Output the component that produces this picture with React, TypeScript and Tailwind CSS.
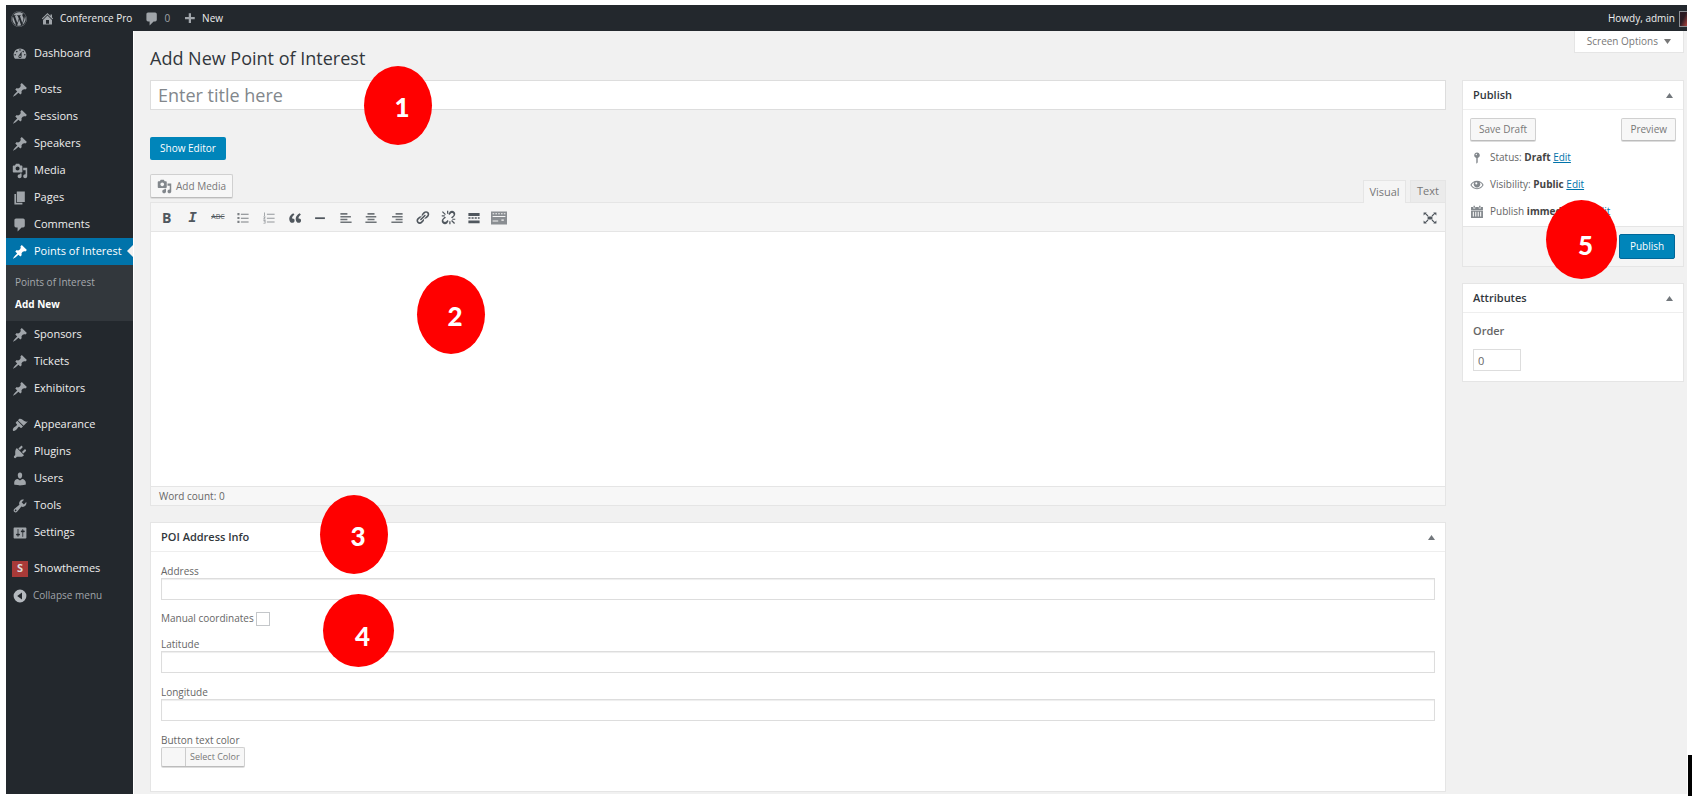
import { ReactNode } from 'react'
import { FaWordpress } from 'react-icons/fa'

const ICONS = {
  dashboard:
    'M3.76 16h12.48c1.1-1.37 1.76-3.11 1.76-5 0-4.42-3.58-8-8-8s-8 3.58-8 8c0 1.89.66 3.63 1.76 5zM10 4c.55 0 1 .45 1 1s-.45 1-1 1-1-.45-1-1 .45-1 1-1zM6 6c.55 0 1 .45 1 1s-.45 1-1 1-1-.45-1-1 .45-1 1-1zm8 0c.55 0 1 .45 1 1s-.45 1-1 1-1-.45-1-1 .45-1 1-1zm-5.37 5.55L12 7v6c0 1.1-.9 2-2 2s-2-.9-2-2c0-.57.24-1.08.63-1.45zM4 10c.55 0 1 .45 1 1s-.45 1-1 1-1-.45-1-1 .45-1 1-1zm12 0c.55 0 1 .45 1 1s-.45 1-1 1-1-.45-1-1 .45-1 1-1zm-5 3c0-.55-.45-1-1-1s-1 .45-1 1 .45 1 1 1 1-.45 1-1z',
  pin: 'M10.44 3.02l1.82-1.82 6.36 6.35-1.83 1.82c-1.05-.68-2.48-.57-3.41.36l-.75.75c-.92.93-1.04 2.35-.35 3.41l-1.83 1.82-2.41-2.41-2.8 2.79c-.42.42-3.38 2.71-3.8 2.29s1.86-3.39 2.28-3.81l2.79-2.79L4.1 9.36l1.83-1.82c1.05.69 2.48.57 3.4-.36l.75-.75c.93-.92 1.05-2.35.36-3.41z',
  media:
    'M13 11V4c0-.55-.45-1-1-1h-1.67L9 1H5L3.67 3H2c-.55 0-1 .45-1 1v7c0 .55.45 1 1 1h10c.55 0 1-.45 1-1zM7 4.5c1.38 0 2.5 1.12 2.5 2.5S8.38 9.5 7 9.5 4.5 8.38 4.5 7 5.62 4.5 7 4.5zM14 6h5v10.5c0 1.38-1.12 2.5-2.5 2.5S14 17.88 14 16.5s1.12-2.5 2.5-2.5c.17 0 .34.02.5.05V9h-3V6zm-4 8.05V13h2v3.5c0 1.38-1.12 2.5-2.5 2.5S7 17.88 7 16.5 8.12 14 9.5 14c.17 0 .34.02.5.05z',
  page: 'M6 15V2h10v13H6zm-1 1h8v2H3V5h2v11z',
  comment: 'M5 2h9c1.1 0 2 .9 2 2v7c0 1.1-.9 2-2 2h-2l-5 5v-5H5c-1.1 0-2-.9-2-2V4c0-1.1.9-2 2-2z',
  appearance:
    'M14.48 11.06L7.41 3.99l1.5-1.5c.5-.56 2.3-.47 3.51.32 1.21.8 1.43 1.28 2.91 2.1 1.18.64 2.45 1.26 4.45.85zm-.71.71L6.7 4.7 4.93 6.47c-.39.39-.39 1.02 0 1.41l1.06 1.06c.39.39.39 1.03 0 1.42-.6.6-1.43 1.11-2.21 1.69-.35.26-.7.53-1.01.84C1.43 14.23.4 16.08 1.4 17.07c.99 1 2.84-.03 4.18-1.36.31-.31.58-.66.85-1.02.57-.78 1.08-1.61 1.69-2.21.39-.39 1.02-.39 1.41 0l1.06 1.06c.39.39 1.02.39 1.41 0z',
  plugin:
    'M13.11 4.36L9.87 7.6 8 5.73l3.24-3.24c.35-.34 1.05-.2 1.56.32.52.51.66 1.21.31 1.55zm-8 1.77l.91-1.12 9.01 9.01-1.19.84c-.71.71-2.63 1.16-3.82 1.16H6.14L4.9 17.26c-.59.59-1.54.59-2.12 0-.59-.58-.59-1.53 0-2.12l1.24-1.24v-3.88c0-1.13.4-3.19 1.09-3.89zm7.26 3.97l3.24-3.24c.34-.35 1.04-.21 1.55.31.52.51.66 1.21.31 1.55l-3.24 3.25z',
  user: 'M10 9.25c-2.27 0-2.73-3.44-2.73-3.44C7 4.02 7.82 2 9.97 2c2.16 0 2.98 2.02 2.71 3.81 0 0-.41 3.44-2.68 3.44zm0 2.57L12.72 10c2.39 0 4.52 2.33 4.52 4.53v2.49s-3.65 1.13-7.24 1.13c-3.65 0-7.24-1.13-7.24-1.13v-2.49c0-2.25 1.94-4.48 4.47-4.48z',
  tools:
    'M16.68 9.77c-1.34 1.34-3.3 1.67-4.95.99l-5.41 6.52c-.99.99-2.59.99-3.58 0s-.99-2.59 0-3.57l6.52-5.42c-.68-1.65-.35-3.61.99-4.95 1.28-1.28 3.12-1.62 4.72-1.06l-2.89 2.89 2.82 2.82 2.86-2.87c.53 1.58.18 3.39-1.08 4.65zM3.81 16.21c.4.39 1.04.39 1.43 0 .4-.4.4-1.04 0-1.43-.39-.4-1.03-.4-1.43 0-.39.39-.39 1.03 0 1.43z',
  settings:
    'M18 16V4c0-.55-.45-1-1-1H3c-.55 0-1 .45-1 1v12c0 .55.45 1 1 1h14c.55 0 1-.45 1-1zM8 11h1c.55 0 1 .45 1 1s-.45 1-1 1H8v1.5c0 .28-.22.5-.5.5s-.5-.22-.5-.5V13H6c-.55 0-1-.45-1-1s.45-1 1-1h1V5.500c0-.28.22-.5.5-.5s.5.22.5.5V11zm5-2h-1c-.55 0-1-.45-1-1s.45-1 1-1h1V5.500c0-.28.22-.5.5-.5s.5.22.5.5V7h1c.55 0 1 .45 1 1s-.45 1-1 1h-1v5.500c0 .28-.22.5-.5.5s-.5-.22-.5-.5V9z',
  collapse: 'M10 2a8 8 0 1 0 0 16a8 8 0 0 0 0-16zM12.5 5.5v9L6.5 10z',
  home: 'M16 8.5l1.53 1.53-1.06 1.06L10 4.6l-6.47 6.49-1.06-1.06L10 2.5l4 4v-2h2v4zm-6-2.46l6 5.99V18H4v-5.97zM12 17v-5H8v5h4z',
  plus: 'M17 8v3h-5v5H9v-5H4V8h5V3h3v5z',
  status:
    'M14 6c0 1.86-1.28 3.41-3 3.86V16c0 1-2 2-2 2V9.860c-1.720-.450-3-2-3-3.860 0-2.210 1.790-4 4-4s4 1.790 4 4zM8 5c0 .55.45 1 1 1s1-.45 1-1-.45-1-1-1-1 .45-1 1z',
  eye: 'M10 4C5.500 4 2.200 6.800.5 10c1.700 3.200 5 6 9.500 6s7.800-2.800 9.500-6C17.800 6.800 14.500 4 10 4zM10 14.600c-3.600 0-6.300-2-7.800-4.600 1-1.700 2.400-3 4.100-3.800A4.600 4.600 0 1 0 13.700 6.200c1.700.8 3.100 2.100 4.100 3.800-1.500 2.600-4.200 4.600-7.800 4.600zM9 6.200a1.500 1.500 0 1 1 0 3a1.500 1.500 0 0 1 0-3z',
  calendar:
    'M5 1h2v3H5zM13 1h2v3h-2zM1.500 3H4.500v2h3V3h5v2h3V3h3v4h-17zM1.500 8h17v10.500h-17zM4 9.500v7h1.500v-7zM7.500 9.500v7H9v-7zM11 9.500v7h1.500v-7zM14.500 9.500v7H16v-7z',
  quote:
    'M9.49 13.22c0-.74-.2-1.38-.61-1.9-.62-.78-1.83-.88-2.53-.72-.29-1.65 1.11-3.75 2.92-4.65L7.88 4c-2.73 1.3-5.42 4.28-4.96 8.05C3.21 14.43 4.59 16 6.54 16c.85 0 1.56-.25 2.12-.75s.83-1.18.83-2.03zm8.05 0c0-.74-.2-1.38-.61-1.9-.63-.78-1.83-.88-2.53-.72-.29-1.65 1.11-3.75 2.92-4.65L15.93 4c-2.73 1.3-5.41 4.28-4.95 8.05.29 2.38 1.66 3.95 3.61 3.95.85 0 1.56-.25 2.12-.75s.83-1.18.83-2.03z',
  ul: 'M2 3h3v3H2zM7 4h11v1.500H7zM2 8.500h3v3H2zM7 9.500h11V11H7zM2 14h3v3H2zM7 15h11v1.500H7z',
  ol: 'M3 2h1.200v5H3zM7 4h11v1.500H7zM2 8h3v1L3.500 11H5v1H2v-1l1.500-2H2zM7 9.500h11V11H7zM2 13h3v5H2v-1h2v-1H2.500v-1H4v-1H2zM7 15h11v1.500H7z',
  hr: 'M3 9h14v2.500H3z',
  left: 'M2 3h10v2.200H2zM2 7h15v2.200H2zM2 11h10v2.200H2zM2 15h16v2.200H2z',
  center: 'M5 3h10v2.200H5zM2.500 7h15v2.200h-15zM5 11h10v2.200H5zM2 15h16v2.200H2z',
  right: 'M8 3h10v2.200H8zM3 7h15v2.200H3zM8 11h10v2.200H8zM2 15h16v2.200H2z',
  link: 'M17.74 2.76c1.68 1.69 1.68 4.41 0 6.1l-1.53 1.52c-1.12 1.12-2.7 1.47-4.14 1.09l2.62-2.61.76-.77.76-.76c.84-.84.84-2.2 0-3.04-.84-.85-2.2-.85-3.04 0l-.77.76-3.38 3.38c-.37-1.44-.02-3.02 1.1-4.14l1.52-1.53c1.69-1.68 4.42-1.68 6.1 0zM8.59 13.43l5.34-5.34c.42-.42.42-1.1 0-1.52-.44-.43-1.13-.39-1.53 0l-5.33 5.34c-.42.42-.42 1.1 0 1.52.44.43 1.13.39 1.52 0zm-.76 2.29l4.14-4.15c.38 1.44.03 3.02-1.09 4.14l-1.52 1.53c-1.69 1.68-4.41 1.68-6.1 0-1.68-1.68-1.68-4.42 0-6.1l1.53-1.52c1.12-1.12 2.7-1.47 4.14-1.1l-4.14 4.15c-.85.84-.85 2.2 0 3.05.84.84 2.2.84 3.04 0z',
  unlink:
    'M17.74 2.26c1.68 1.69 1.68 4.41 0 6.1l-1.53 1.52c-.5.5-1 .8-1.600 1l-1.200-1.300 2.040-1.220.76-.76c.84-.84.84-2.2 0-3.04-.84-.85-2.2-.85-3.04 0l-2.070 2.060-1.200-1.300 1.740-3.060c1.690-1.680 4.420-1.680 6.100 0zM2.260 17.740c-1.680-1.680-1.680-4.420 0-6.100l1.530-1.520c.5-.5 1-.8 1.600-1l1.200 1.300-2.040 1.220-.76.760c-.84.840-.84 2.200 0 3.040.840.840 2.200.840 3.040 0l2.070-2.060 1.200 1.300-1.740 3.060c-1.690 1.680-4.420 1.680-6.100 0zM2.500 1.500l4 4-1.200 1.200-4-4zM8 1h1.700v4H8zM1 7h4v1.600H1zM17.500 18.500l-4-4 1.200-1.200 4 4zM11 15h1.700v4H11zM15 11.500h4v1.600h-4z',
  more: 'M2 3h16v4H2zM2 9h3v2.200H2zM6.500 9h3v2.200h-3zM11 9h3v2.200h-3zM15.500 9H18v2.200h-2.500zM2 13.500h16v4H2z',
  kitchen:
    'M0 2h20v16H0zM2 4v1.200h2V4zM5.500 4v1.200h2V4zM9 4v1.200h2V4zM12.500 4v1.200h2V4zM16 4v1.200h2V4zM2 7.500v1.200h16V7.500zM2 13v1.500h7V13zM13 12v1.500h3V12z',
  expand:
    'M7 8h6v4H7zM2 3h4L4.900 4.200 8 7 7 8 3.900 5.100 2 7zM18 3h-4l1.100 1.200L12 7l1 1 3.100-2.900L18 7zM2 17h4l-1.100-1.200L8 13l-1-1-3.100 2.900L2 13zM18 17h-4l1.100-1.200L12 13l1-1 3.100 2.900L18 13z',
}

type IconName = keyof typeof ICONS

function Icon({ name, className = 'size-4' }: { name: IconName; className?: string }) {
  return (
    <svg viewBox="0 0 20 20" className={`shrink-0 ${className}`} fill="currentColor" fillRule="evenodd" aria-hidden="true">
      <path d={ICONS[name]} />
    </svg>
  )
}

const menuGroups: { label: string; icon: IconName }[][] = [
  [{ label: 'Dashboard', icon: 'dashboard' }],
  [
    { label: 'Posts', icon: 'pin' },
    { label: 'Sessions', icon: 'pin' },
    { label: 'Speakers', icon: 'pin' },
    { label: 'Media', icon: 'media' },
    { label: 'Pages', icon: 'page' },
    { label: 'Comments', icon: 'comment' },
    { label: 'Points of Interest', icon: 'pin' },
    { label: 'Sponsors', icon: 'pin' },
    { label: 'Tickets', icon: 'pin' },
    { label: 'Exhibitors', icon: 'pin' },
  ],
  [
    { label: 'Appearance', icon: 'appearance' },
    { label: 'Plugins', icon: 'plugin' },
    { label: 'Users', icon: 'user' },
    { label: 'Tools', icon: 'tools' },
    { label: 'Settings', icon: 'settings' },
  ],
]

const formatTools: { label: string; icon: IconName; className?: string }[] = [
  { label: 'Bulleted list', icon: 'ul', className: 'size-[14px] text-[#7c8084]' },
  { label: 'Numbered list', icon: 'ol', className: 'size-[14px] text-[#94989c]' },
  { label: 'Blockquote', icon: 'quote' },
  { label: 'Horizontal line', icon: 'hr', className: 'size-[14px]' },
  { label: 'Align left', icon: 'left', className: 'size-[14px] text-[#6f7478]' },
  { label: 'Align center', icon: 'center', className: 'size-[14px] text-[#6f7478]' },
  { label: 'Align right', icon: 'right', className: 'size-[14px] text-[#6f7478]' },
  { label: 'Insert link', icon: 'link', className: 'size-[15px]' },
  { label: 'Remove link', icon: 'unlink', className: 'size-[15px]' },
  { label: 'Read more', icon: 'more', className: 'size-[14px]' },
  { label: 'Toolbar toggle', icon: 'kitchen', className: 'size-4 text-[#8a8e92]' },
]

const markers = [
  { n: 1, className: 'left-[364px] top-[66px] h-[79px] w-[68px] pt-1' },
  { n: 2, className: 'left-[417px] top-[275px] h-[79px] w-[68px] pt-1' },
  { n: 3, className: 'left-[320px] top-[495px] h-[79px] w-[68px] pt-1' },
  { n: 4, className: 'left-[323px] top-[594px] h-[73px] w-[71px] pt-3' },
  { n: 5, className: 'right-[75px] top-[200px] h-[79px] w-[71px] pt-3' },
]

const greyButton =
  'rounded-xs border border-[#d0d0d0] border-b-[#bcbcbc] bg-[#f7f7f7] text-[#777] shadow-[0_1px_0_#ddd]'

function AdminBar() {
  return (
    <header className="flex h-[26px] items-center overflow-hidden bg-[#23282d] pt-px pl-[5px] text-[10px] font-medium text-[#eee]">
      <a href="#" aria-label="About WordPress" className="text-[#a0a5aa]">
        <FaWordpress className="size-4" />
      </a>
      <a href="#" className="ml-[13px] flex items-center gap-[5px]">
        <Icon name="home" className="size-[15px] text-[#a0a5aa]" />
        Conference Pro
      </a>
      <a href="#" className="ml-3 flex items-center gap-1 text-[#a0a5aa]">
        <Icon name="comment" />
        0
      </a>
      <a href="#" className="ml-3 flex items-center gap-[5px]">
        <Icon name="plus" className="size-[15px] text-[#a0a5aa]" />
        New
      </a>
      <a href="#" className="ml-auto flex items-center gap-1">
        Howdy, admin
        <span className="h-4 w-2 border border-r-0 border-[#8c8f94] bg-linear-to-br from-[#2a1a22] from-45% to-[#b5413c]" />
      </a>
    </header>
  )
}

function SideMenu() {
  return (
    <nav className="flex w-[127px] shrink-0 flex-col gap-[9px] bg-[#23282d] pt-[9px] text-[11px] text-[#eee]">
      {menuGroups.map((group, i) => (
        <ul key={i}>
          {group.map(item => {
            const current = item.label === 'Points of Interest'
            return (
              <li key={item.label}>
                <a
                  href="#"
                  className={`relative flex h-[27px] items-center gap-[6px] pl-[6px] whitespace-nowrap ${current ? 'bg-[#0073aa] text-white' : ''}`}
                >
                  <Icon name={item.icon} className={current ? 'size-4 text-white' : 'size-4 text-[#a0a5aa]'} />
                  {item.label}
                  {current && (
                    <span className="absolute top-[7px] right-0 border-y-6 border-r-6 border-y-transparent border-r-[#f1f1f1]" />
                  )}
                </a>
                {current && (
                  <ul className="bg-[#32373c] py-[6px] pl-[9px] text-[10px]">
                    <li className="h-[22px] leading-[22px] font-medium text-[#a5a9ad]">
                      <a href="#">Points of Interest</a>
                    </li>
                    <li className="h-[22px] leading-[22px] font-bold text-white">
                      <a href="#">Add New</a>
                    </li>
                  </ul>
                )}
              </li>
            )
          })}
        </ul>
      ))}
      <div>
        <a href="#" className="flex h-[27px] items-center gap-[6px] pl-[6px]">
          <span className="flex size-4 items-center justify-center bg-[#a83a38] text-[11px] font-bold text-[#ddd]">
            S
          </span>
          Showthemes
        </a>
        <button type="button" className="flex h-[27px] items-center gap-[5px] pl-[6px] text-[10px] font-medium text-[#a0a5aa]">
          <Icon name="collapse" className="size-4 text-[#b4b9be]" />
          Collapse menu
        </button>
      </div>
    </nav>
  )
}

function Panel({ title, children }: { title: string; children: ReactNode }) {
  return (
    <section className="border border-[#e5e5e5] bg-white">
      <h2 className="flex h-[29px] items-center justify-between border-b border-[#eee] px-[10px] text-[11px] font-semibold text-[#32373c]">
        {title}
        <button type="button" aria-label={`Toggle ${title}`} className="text-[#72777c]">
          <svg viewBox="0 0 7 5" className="h-[5px] w-[7px]" fill="currentColor">
            <path d="M3.500 0L7 5H0z" />
          </svg>
        </button>
      </h2>
      {children}
    </section>
  )
}

function Field({ id, label }: { id: string; label: string }) {
  return (
    <div>
      <label htmlFor={id} className="block h-[14px] leading-[14px]">
        {label}
      </label>
      <input id={id} type="text" className="block h-[22px] w-full border border-[#ddd] bg-white px-1 shadow-[inset_0_1px_1px_#eee]" />
    </div>
  )
}

function Editor() {
  return (
    <div className="mt-[14px]">
      <div className="flex items-start justify-between">
        <button type="button" className={`flex h-6 items-center gap-1 px-[6px] text-[10px] font-medium ${greyButton}`}>
          <Icon name="media" className="size-[15px] text-[#82878c]" />
          Add Media
        </button>
        <div className="flex gap-1 pt-[6px] text-[11px] text-[#777]">
          <button type="button" className="-mb-px h-[23px] w-[43px] border border-b-0 border-[#e5e5e5] bg-[#f5f5f5]">
            Visual
          </button>
          <button type="button" className="h-[22px] w-[36px] border border-b-0 border-[#e5e5e5] bg-[#ebebeb]">
            Text
          </button>
        </div>
      </div>
      <div className="border border-[#e5e5e5] bg-white">
        <div className="flex h-[29px] items-center justify-between border-b border-[#e5e5e5] bg-[#f5f5f5] pt-px pr-[7px] pl-[3px] text-[#50575e]">
          <div className="grid w-[358px] grid-cols-14 place-items-center">
            <button type="button" aria-label="Bold" className="text-sm font-bold">
              B
            </button>
            <button type="button" aria-label="Italic" className="font-['Liberation_Mono',monospace] text-sm font-bold italic">
              I
            </button>
            <button type="button" aria-label="Strikethrough" className="text-[7px] line-through">
              ABC
            </button>
            {formatTools.map(tool => (
              <button key={tool.label} type="button" aria-label={tool.label}>
                <Icon name={tool.icon} className={tool.className} />
              </button>
            ))}
          </div>
          <button type="button" aria-label="Fullscreen">
            <Icon name="expand" />
          </button>
        </div>
        <textarea aria-label="Content" className="block h-[254px] w-full resize-none p-2 text-xs outline-none" />
        <div className="h-[19px] border-t border-[#e5e5e5] bg-[#f7f7f7] pl-2 text-[10px] leading-[18px]">Word count: 0</div>
      </div>
    </div>
  )
}

function AddressPanel() {
  return (
    <Panel title="POI Address Info">
      <div className="flex flex-col px-[10px] pt-3 pb-6 text-[10px] font-medium">
        <Field id="address" label="Address" />
        <div className="flex h-[37px] items-center gap-[2px]">
          <label htmlFor="manual">Manual coordinates</label>
          <input id="manual" type="checkbox" className="size-[14px] appearance-none border border-[#c4c7ca] bg-white" />
        </div>
        <div className="flex flex-col gap-3">
          <Field id="latitude" label="Latitude" />
          <Field id="longitude" label="Longitude" />
          <div>
            <label htmlFor="color" className="block h-[14px] leading-[14px]">
              Button text color
            </label>
            <button id="color" type="button" className={`flex h-5 items-stretch text-[9px] leading-[18px] ${greyButton}`}>
              <span className="w-6 border-r border-[#ccc]" />
              <span className="px-1">Select Color</span>
            </button>
          </div>
        </div>
      </div>
    </Panel>
  )
}

function PublishRow({ icon, label, value }: { icon: IconName; label: string; value: string }) {
  return (
    <div className="flex h-[27px] items-center gap-[6px]">
      <Icon name={icon} className="size-[14px] text-[#82878c]" />
      <span>
        {label} <b className="font-bold text-[#444]">{value}</b>{' '}
        <a href="#" className="text-[#0073aa] underline">
          Edit
        </a>
      </span>
    </div>
  )
}

function PublishPanel() {
  return (
    <Panel title="Publish">
      <div className="px-[7px] pt-2 text-[10px] font-medium">
        <div className="flex justify-between">
          <button type="button" className={`h-[23px] px-2 ${greyButton}`}>
            Save Draft
          </button>
          <button type="button" className={`h-[23px] px-2 ${greyButton}`}>
            Preview
          </button>
        </div>
        <div className="pt-[3px] pb-px">
          <PublishRow icon="status" label="Status:" value="Draft" />
          <PublishRow icon="eye" label="Visibility:" value="Public" />
          <PublishRow icon="calendar" label="Publish" value="immediately" />
        </div>
      </div>
      <div className="flex justify-end border-t border-[#e5e5e5] bg-[#f5f5f5] px-2 py-[7px]">
        <button
          type="button"
          className="h-[25px] w-[56px] rounded-xs border border-[#006799] bg-[#0085ba] text-[10px] font-medium text-white"
        >
          Publish
        </button>
      </div>
    </Panel>
  )
}

function App() {
  return (
    <div className="relative flex min-h-screen bg-white pt-[5px] pl-[6px] font-['Open_Sans',sans-serif] text-[#666]">
      <div className="flex min-w-0 flex-1 flex-col pb-[2px]">
        <AdminBar />
        <div className="flex flex-1">
          <SideMenu />
          <main className="ml-px flex-1 bg-[#f1f1f1] pr-[3px] pl-4">
            <div className="flex items-start justify-between">
              <h1 className="pt-[14px] pb-2 text-lg leading-[27px] text-[#32373c]">Add New Point of Interest</h1>
              <button
                type="button"
                className="flex h-[22px] items-center gap-[6px] border border-t-0 border-[#e5e5e5] bg-white px-3 text-[10px] font-medium text-[#777]"
              >
                Screen Options
                <svg viewBox="0 0 7 5" className="h-[5px] w-[7px]" fill="currentColor">
                  <path d="M0 0h7L3.500 5z" />
                </svg>
              </button>
            </div>
            <div className="flex items-start gap-4">
              <div className="min-w-0 flex-1">
                <input
                  type="text"
                  aria-label="Title"
                  placeholder="Enter title here"
                  className="block h-[30px] w-full border border-[#ddd] bg-white px-[7px] text-lg placeholder:text-[#82878c]"
                />
                <button type="button" className="mt-[27px] block h-[23px] w-[76px] rounded-xs bg-[#0085ba] text-[10px] font-medium text-white">
                  Show Editor
                </button>
                <Editor />
                <div className="mt-4">
                  <AddressPanel />
                </div>
              </div>
              <aside className="flex w-[222px] shrink-0 flex-col gap-4">
                <PublishPanel />
                <Panel title="Attributes">
                  <div className="px-[10px] pt-[10px] pb-[10px] text-[11px]">
                    <label htmlFor="order" className="block h-4 leading-4 font-semibold">
                      Order
                    </label>
                    <input
                      id="order"
                      type="text"
                      defaultValue="0"
                      className="mt-[10px] block h-[22px] w-12 border border-[#ddd] px-1"
                    />
                  </div>
                </Panel>
              </aside>
            </div>
          </main>
        </div>
      </div>
      <div className="flex w-[5px] items-end justify-end">
        <div className="h-[41px] w-1 bg-black" />
      </div>
      {markers.map(marker => (
        <div
          key={marker.n}
          className={`absolute flex items-center justify-center rounded-[50%] bg-[#f00] pl-2 font-[Lato,sans-serif] text-[26px] font-black text-white ${marker.className}`}
        >
          {marker.n}
        </div>
      ))}
    </div>
  )
}

export default App
